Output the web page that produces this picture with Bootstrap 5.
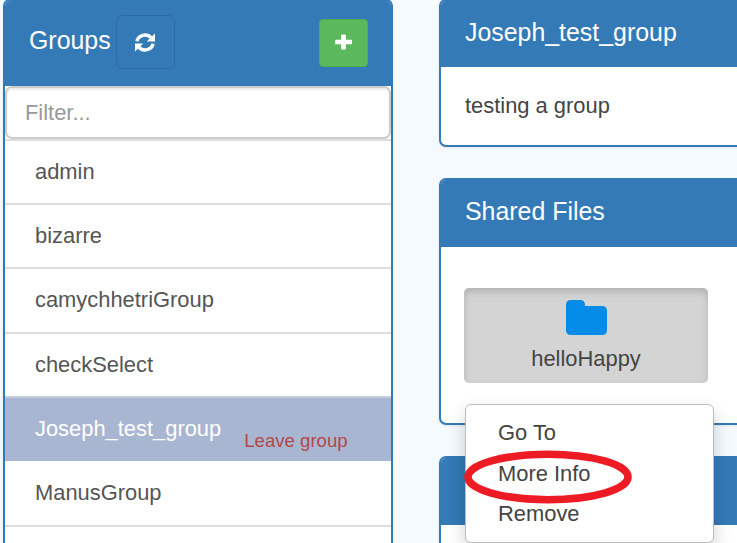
<!DOCTYPE html>
<html lang="en">
<head>
<meta charset="utf-8">
<title>Groups</title>
<link rel="stylesheet" href="https://cdn.jsdelivr.net/npm/bootstrap@5.3.0/dist/css/bootstrap.min.css">
<style>
body{background:#f5faff;font-family:"Liberation Sans",Arial,sans-serif;font-size:21.9px;line-height:32px;color:#444}
.layout{width:737px;height:543px;overflow:hidden;padding-left:3px;gap:46px}
.panel{background:#fff;border:2px solid #337ab7;border-radius:7px;box-shadow:0 1px 3px rgba(0,0,0,.08)}
.panel-title{background:#337ab7;color:#fff;font-size:24.9px;line-height:30px}
.groups{width:390px;height:570px;margin-top:-1px}
.groups .panel-title{height:85px;padding:0 23px 3px 24px}
.refresh{width:59px;height:54px;border:1px solid #2e6da4;border-radius:6px;margin-left:5px;padding:0}
.add{width:49px;height:48px;background:#5cb85c;border:1px solid #4cae4c;border-radius:4px;padding:0;margin-top:2px}
.add svg{margin-top:-3px;margin-right:1px}
.filter{height:53px;border:2px solid #ccc;border-radius:7px;padding:0 18px;font-size:21.9px;color:#555;box-shadow:inset 0 2px 2px rgba(0,0,0,.075)}
.filter::placeholder{color:#999}
.list-group .group-row{height:64.2px;border:0;border-top:2px solid #ddd;padding:0 30px;color:#555;background:#fff}
.list-group .group-row.selected{background:#a9b6d1;color:#fff;border-top-color:#c4cede;height:65px}
.leave{font-size:18.6px;color:#b04a4a;margin:23px 0 0 23px;line-height:24px}
.main{width:330px;gap:31px;margin-top:-1px}
.main .panel-title{height:67px;padding:0 24px 5px}
.about{height:148px}
.about .panel-title{height:66px}
.about-text{padding:23px 24px}
.files{height:247px}
.members{height:120px}
.tile{width:244px;height:95px;margin:41px 0 0 23px;background:#d4d4d4;border-radius:5px;box-shadow:inset 0 4px 7px rgba(0,0,0,.16);padding-top:12px;line-height:32px;color:#444}
.files-wrap{height:247px}
.context{left:26px;top:226px;width:249px;height:139px;background:#fff;border:1px solid #bbb;border-radius:6px;box-shadow:0 8px 18px rgba(0,0,0,.18);padding:7px 0;z-index:3}
.context a{display:block;height:40.5px;line-height:41px;padding-left:32px;color:#444;text-decoration:none}
.ring{left:-3px;top:45px;width:170px;height:55px}
</style>
<script src="https://cdn.jsdelivr.net/npm/bootstrap@5.3.0/dist/js/bootstrap.bundle.min.js"></script>
</head>
<body>
<div class="layout d-flex align-items-start">
  <section class="groups panel overflow-hidden flex-shrink-0">
    <header class="panel-title d-flex align-items-center">
      <span class="pb-1">Groups</span>
      <button class="refresh btn d-flex align-items-center justify-content-center" aria-label="Refresh">
        <svg width="20" height="19" viewBox="0 0 20 19" fill="none" stroke="#fff" stroke-width="3.400"><path d="M1.800 8.200C3.500 2 11.500-.2 16 4.700"/><path d="M18.200 10.800C16.500 17 8.500 19.200 4 14.300"/><path fill="#fff" stroke="none" d="M20 .5v7.900h-8.300zM0 18.500v-7.900h8.300z"/></svg>
      </button>
      <button class="add btn d-flex align-items-center justify-content-center ms-auto" aria-label="Add group">
        <svg width="17" height="16" viewBox="0 0 18 16" fill="#fff"><path d="M6.500 1q0-1 1-1h3q1 0 1 1v4.500H17q1 0 1 1v3q0 1-1 1h-5.500V15q0 1-1 1h-3q-1 0-1-1v-4.500H1q-1 0-1-1v-3q0-1 1-1h5.500z"/></svg>
      </button>
    </header>
    <input class="filter form-control" placeholder="Filter...">
    <div class="list-group list-group-flush">
      <div class="group-row list-group-item d-flex align-items-center">admin</div>
      <div class="group-row list-group-item d-flex align-items-center">bizarre</div>
      <div class="group-row list-group-item d-flex align-items-center">camychhetriGroup</div>
      <div class="group-row list-group-item d-flex align-items-center">checkSelect</div>
      <div class="group-row selected list-group-item d-flex align-items-center">Joseph_test_group<span class="leave">Leave group</span></div>
      <div class="group-row list-group-item d-flex align-items-center border-top-0">ManusGroup</div>
      <div class="group-row list-group-item"></div>
    </div>
  </section>
  <main class="main d-flex flex-column flex-shrink-0">
    <section class="about panel overflow-hidden">
      <header class="panel-title d-flex align-items-center">Joseph_test_group</header>
      <div class="about-text">testing a group</div>
    </section>
    <div class="files-wrap position-relative">
      <section class="files panel overflow-hidden">
        <header class="panel-title d-flex align-items-center">Shared Files</header>
        <div class="tile d-flex flex-column align-items-center">
          <svg class="flex-shrink-0" width="41" height="35" viewBox="0 0 41 35" fill="#058be8"><path d="M0 5q0-5 5-5h9q5 0 5 5v1h17q5 0 5 5v19q0 5-5 5H5q-5 0-5-5z"/></svg>
          <span class="mt-2">helloHappy</span>
        </div>
      </section>
      <nav class="context position-absolute">
        <a href="#">Go To</a><a href="#">More Info</a><a href="#">Remove</a>
        <svg class="ring position-absolute" viewBox="0 0 170 55" fill="none" stroke="#ed1c24" stroke-width="7.600"><ellipse cx="85" cy="27" rx="80" ry="22.700"/></svg>
      </nav>
    </div>
    <section class="members panel overflow-hidden"><header class="panel-title"></header></section>
  </main>
</div>
</body>
</html>
